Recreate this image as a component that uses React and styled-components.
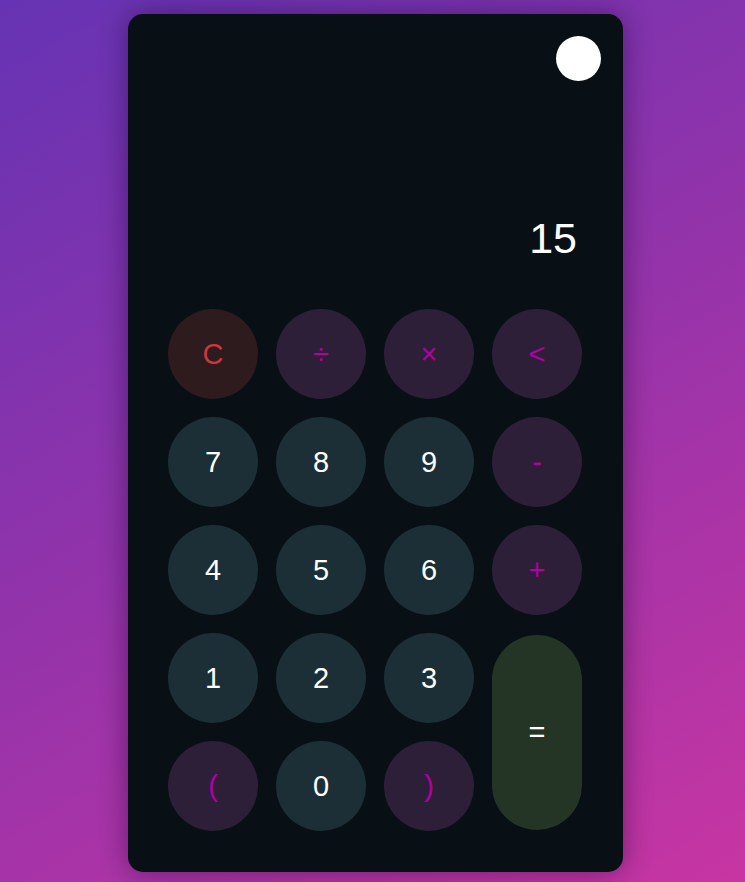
import React from 'react';
import styled, { createGlobalStyle } from 'styled-components';

const GlobalStyle = createGlobalStyle`
	html, body {
		margin: 0;
		padding: 0;
	}

	body {
		min-height: 100vh;
		background: linear-gradient(150deg, #6633b4 0%, #9533aa 50%, #c735a2 100%);
		font-family: 'Liberation Sans', Arial, sans-serif;
	}
`;

const Page = styled.div`
	display: flex;
	justify-content: center;
	padding: 14px 0 10px 6px;
`;

const Calculator = styled.div`
	width: 495px;
	height: 858px;
	box-sizing: border-box;
	padding: 22px 41px 40px 40px;
	background: #081016;
	border-radius: 15px;
	box-shadow: 0 0 28px rgba(20, 0, 40, 0.45);
	display: flex;
	flex-direction: column;
`;

const TopBar = styled.div`
	display: flex;
	justify-content: flex-end;
	margin-right: -19px;
`;

const ThemeToggle = styled.button`
	width: 45px;
	height: 45px;
	border-radius: 50%;
	border: none;
	background: #fff;
	cursor: pointer;
	padding: 0;
`;

const Display = styled.div`
	height: 228px;
	box-sizing: border-box;
	display: flex;
	align-items: flex-end;
	justify-content: flex-end;
	padding: 0 5px 49px 0;
	color: #fff;
	font-size: 43px;
	line-height: 1;
`;

const Keypad = styled.div`
	display: grid;
	grid-template-columns: repeat(4, 90px);
	grid-auto-rows: 90px;
	gap: 18px;
`;

const variants = {
	digit: { bg: '#1c2f36', fg: '#ffffff' },
	op: { bg: '#2d1f38', fg: '#b000a6' },
	clear: { bg: '#2e1b1e', fg: '#cc363d' },
	equal: { bg: '#253525', fg: '#ffffff' },
};

const Key = styled.button`
	border: none;
	border-radius: 45px;
	background: ${(p) => variants[p.$kind].bg};
	color: ${(p) => variants[p.$kind].fg};
	font-family: 'Liberation Sans', Arial, sans-serif;
	font-size: 29px;
	cursor: pointer;
	padding: 0;
	display: flex;
	align-items: center;
	justify-content: center;

	${(p) =>
		p.$tall &&
		`
		grid-row: span 2;
		height: 195px;
		align-self: center;
	`}
`;

const keys = [
	['C', 'clear'],
	['÷', 'op'],
	['×', 'op'],
	['<', 'op'],
	['7', 'digit'],
	['8', 'digit'],
	['9', 'digit'],
	['-', 'op'],
	['4', 'digit'],
	['5', 'digit'],
	['6', 'digit'],
	['+', 'op'],
	['1', 'digit'],
	['2', 'digit'],
	['3', 'digit'],
	['=', 'equal', true],
	['(', 'op'],
	['0', 'digit'],
	[')', 'op'],
];

export default function App() {
	return (
		<>
			<GlobalStyle />
			<Page>
				<Calculator>
					<TopBar>
						<ThemeToggle aria-label="Toggle theme" />
					</TopBar>
					<Display>15</Display>
					<Keypad>
						{keys.map(([label, kind, tall]) => (
							<Key key={label} $kind={kind} $tall={tall}>
								{label}
							</Key>
						))}
					</Keypad>
				</Calculator>
			</Page>
		</>
	);
}
